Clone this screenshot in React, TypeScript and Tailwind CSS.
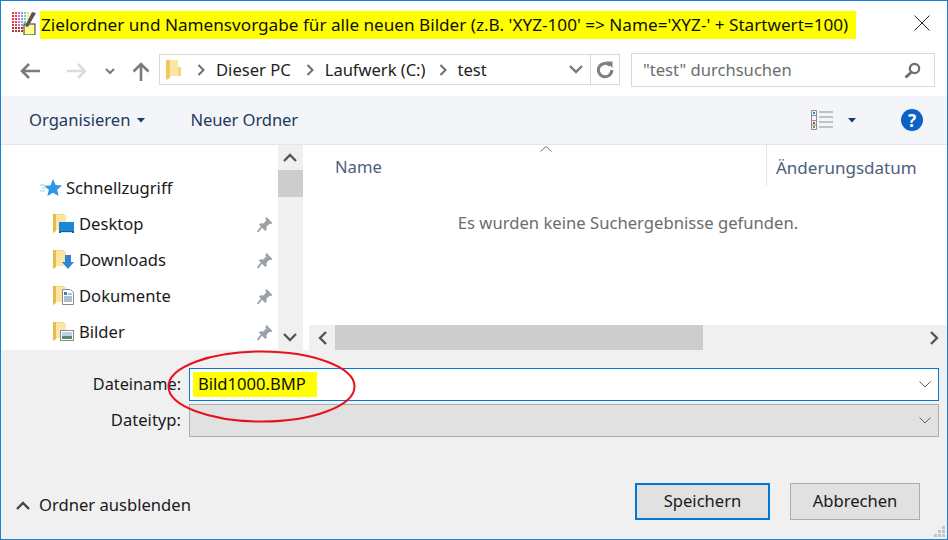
import React from "react";

const Folder = () => (
  <svg width="14" height="21" viewBox="0 0 14 21" className="shrink-0">
    <path d="M0 1h11v16H3l-3 3z" fill="#f6d77e" />
    <path d="M3 2h10v15H3z" fill="#fbe6a6" />
    <path d="M0 1h3v17l-3 2z" fill="#e9bb4e" />
  </svg>
);

const Pin = () => (
  <svg width="16" height="17" viewBox="0 0 16 17">
    <path d="M9.500 1l6 6-2 1.200-1-.5-3 3 .2 3-1.400 1.300-6.300-6.300 1.300-1.400 3 .2 3-3L8.300 3z" fill="#98a0a8" />
    <path d="M4.500 11L.6 16" stroke="#98a0a8" strokeWidth="1.800" />
  </svg>
);

function Overlay({ kind }: { kind: string }) {
  if (kind === "desktop")
    return (
      <svg width="15" height="11" viewBox="0 0 15 11">
        <rect width="15" height="11" fill="#1b87d6" />
        <rect y="9" width="15" height="2" fill="#0f5e9e" />
        <rect x="2" y="10" width="11" height="1" fill="#cfe6f7" />
      </svg>
    );
  if (kind === "down")
    return (
      <svg width="12" height="14" viewBox="0 0 12 14">
        <path d="M3 0h6v7h3l-6 7-6-7h3z" fill="#2e84d6" />
      </svg>
    );
  if (kind === "doc")
    return (
      <svg width="12" height="16" viewBox="0 0 12 16">
        <path d="M.5.500h8l3 3v12H.5z" fill="#fff" stroke="#8a8a8a" />
        <path d="M2 3h3v3H2z" fill="#3a7cc0" />
        <path d="M6 5h4M2 8h8M2 10h8M2 12h8" stroke="#5f7f9f" />
      </svg>
    );
  return (
    <svg width="14" height="11" viewBox="0 0 14 11">
      <rect x=".5" y=".5" width="13" height="10" fill="#fff" stroke="#8a8a8a" />
      <rect x="2" y="2" width="10" height="4" fill="#b8d3e8" />
      <rect x="2" y="6" width="10" height="3" fill="#5f8a6a" />
    </svg>
  );
}

function NavItem({ label, kind }: { label: string; kind: string }) {
  return (
    <div className="flex items-center h-9 pl-[52px] pr-[5px]">
      <div className="relative w-[26px] h-[22px] shrink-0">
        <Folder />
        <div className="absolute right-[5px] bottom-[2px] leading-none flex">
          <Overlay kind={kind} />
        </div>
      </div>
      <span className="flex-1 text-[#1a1a1a]">{label}</span>
      <Pin />
    </div>
  );
}

const Chevron = ({ d, w = 14, h = 14, color = "#5a5a5a", sw = 2.400 }: { d: string; w?: number; h?: number; color?: string; sw?: number }) => (
  <svg width={w} height={h} viewBox={`0 0 ${w} ${h}`} fill="none">
    <path d={d} stroke={color} strokeWidth={sw} />
  </svg>
);

const Crumb = () => (
  <svg width="8" height="12" viewBox="0 0 8 12" fill="none" className="shrink-0">
    <path d="M1.500 1l5 5-5 5" stroke="#6d6d6d" strokeWidth="2" />
  </svg>
);

const ComboChevron = () => (
  <svg width="12" height="7" viewBox="0 0 12 7" fill="none">
    <path d="M.5.500L6 6l5.500-5.500" stroke="#606060" />
  </svg>
);

function AppIcon() {
  const colors = ["#e33", "#e44", "#d6d", "#99d", "#6cc", "#ee3"];
  return (
    <div className="relative w-6 h-6 mr-[4px] shrink-0">
      <svg width="24" height="24" viewBox="0 0 24 24">
        {colors.map((c, i) =>
          [0, 1, 2, 3, 4, 5, 6].map((j) => (
            <rect key={`${i}-${j}`} x={i * 3} y={j * 3 + 1} width="2" height="2" fill={j > 4 ? "#a33" : c} />
          ))
        )}
        <rect x="12" y="13" width="11" height="11" fill="#fdfd90" stroke="#333" />
        <path d="M13 15l7-14 4 1-8 14z" fill="#555" />
      </svg>
    </div>
  );
}

export default function App() {
  return (
    <div className="relative w-[948px] h-[540px] overflow-hidden flex flex-col bg-white border border-[#1783d8] font-['Noto_Sans',sans-serif] text-[16.6px] leading-none">
      {/* Title */}
      <div className="h-[47px] flex items-start pl-[11px] pr-[17px] pt-[10px] shrink-0">
        <AppIcon />
        <div className="h-7 w-[816px] bg-[#ffff00] flex items-center pl-[1px] text-[#111] whitespace-nowrap text-[17.15px]">
          Zielordner und Namensvorgabe für alle neuen Bilder (z.B. 'XYZ-100' =&gt; Name='XYZ-' + Startwert=100)
        </div>
        <div className="flex-1 flex justify-end pt-[4px]">
          <svg width="16" height="16" viewBox="0 0 16 16" fill="none">
            <path d="M.5.500l15 15M15.500.500l-15 15" stroke="#222" />
          </svg>
        </div>
      </div>

      {/* Nav row */}
      <div className="h-[48px] flex items-start shrink-0 pl-[19px] pr-[12px]">
        <div className="w-[47px] h-[46px] flex items-center">
          <svg width="20" height="16" viewBox="0 0 20 16" fill="none">
            <path d="M20 8H2M9 1L2 8l7 7" stroke="#7a7a7a" strokeWidth="2.600" />
          </svg>
        </div>
        <div className="w-[38px] h-[46px] flex items-center">
          <svg width="20" height="16" viewBox="0 0 20 16" fill="none">
            <path d="M0 8h18M11 1l7 7-7 7" stroke="#dcdcdc" strokeWidth="2.600" />
          </svg>
        </div>
        <div className="w-[27px] h-[46px] flex items-center">
          <svg width="10" height="7" viewBox="0 0 10 7" fill="none">
            <path d="M1 1l4 4 4-4" stroke="#7a7a7a" strokeWidth="2" />
          </svg>
        </div>
        <div className="w-[27px] h-[46px] flex items-center">
          <svg width="18" height="19" viewBox="0 0 18 19" fill="none">
            <path d="M9 19V2M1.500 9.500L9 2l7.500 7.500" stroke="#7a7a7a" strokeWidth="2.600" />
          </svg>
        </div>
        {/* Address */}
        <div className="mt-[6px] w-[461px] h-[31px] border border-[#d9d9d9] flex items-center pl-[6px] text-[#222] whitespace-nowrap">
          <svg width="15" height="20" viewBox="0 0 15 20" className="shrink-0">
            <path d="M0 0h12v16H3l-3 3z" fill="#fbe6a6" />
            <path d="M0 0h4v18l-4 2z" fill="#f0c860" />
            <path d="M12 7h3v9h-3z" fill="#f6d77e" />
          </svg>
          <div className="w-[16px]" />
          <Crumb />
          <span className="ml-[11px] mr-[15px] pt-[2px]">Dieser PC</span>
          <Crumb />
          <span className="ml-[11px] mr-[14px] pt-[2px] tracking-[-0.05px]">Laufwerk (C:)</span>
          <Crumb />
          <span className="ml-[10px] flex-1 pt-[2px]">test</span>
          <div className="w-[29px] flex justify-center">
            <svg width="14" height="9" viewBox="0 0 14 9" fill="none">
              <path d="M1 1l6 6 6-6" stroke="#7a7a7a" strokeWidth="2.400" />
            </svg>
          </div>
          <div className="w-[29px] h-full border-l border-[#d9d9d9] flex items-center justify-center">
            <svg width="18" height="18" viewBox="0 0 18 18" fill="none">
              <path d="M14 4.500A6.700 6.700 0 1 0 15.800 9" stroke="#808080" strokeWidth="3" />
              <path d="M10 .5h6.500V7z" fill="#808080" />
            </svg>
          </div>
        </div>
        <div className="flex-1" />
        {/* Search */}
        <div className="mt-[5px] w-[304px] h-[34px] border border-[#d9d9d9] flex items-center pl-[11px] pr-[13px] text-[#6d6d6d] justify-between">
          <span>"test" durchsuchen</span>
          <svg width="17" height="17" viewBox="0 0 17 17" fill="none">
            <circle cx="10.500" cy="6.500" r="4.700" stroke="#6d6d6d" strokeWidth="2.200" />
            <path d="M7 10.500L1.500 15.500" stroke="#6d6d6d" strokeWidth="3" />
          </svg>
        </div>
      </div>

      {/* Toolbar */}
      <div className="h-[49px] bg-[#f3f5f8] border-b border-[#e5e5e5] flex items-center pl-[28px] pr-[24px] text-[#1e3a5f] shrink-0">
        <span>Organisieren</span>
        <svg width="8" height="5" viewBox="0 0 8 5" className="ml-[7px]">
          <path d="M0 0h8L4 4.500z" fill="#1e3a5f" />
        </svg>
        <span className="ml-[45px] tracking-[-0.1px]">Neuer Ordner</span>
        <div className="flex-1" />
        <svg width="22" height="20" viewBox="0 0 22 20" fill="none">
          <path d="M.5.500h5v19h-5zM.5 5.500h5M.5 10.500h5M.5 15h5" stroke="#8d8d8d" />
          <path d="M8 2h14M8 7h14M8 12h14M8 17h14" stroke="#8d8d8d" />
          <rect x="2" y="2" width="2" height="2" fill="#3a7cc0" />
          <rect x="2" y="12" width="2" height="2" fill="#d33" />
          <rect x="2" y="16" width="2" height="2" fill="#6a9a4a" />
        </svg>
        <svg width="8" height="5" viewBox="0 0 8 5" className="ml-[15px]">
          <path d="M0 0h8L4 4.500z" fill="#1e3a5f" />
        </svg>
        <div className="ml-[45px] w-[22px] h-[22px] rounded-full bg-[#0b63c5] text-white flex items-center justify-center font-bold text-[17px]">?</div>
      </div>

      {/* Content */}
      <div className="h-[205px] flex shrink-0 overflow-hidden">
        {/* Sidebar */}
        <div className="w-[277px] h-full pt-[25px] shrink-0">
          <div className="flex items-center h-9 pl-[39px]">
            <svg width="22" height="20" viewBox="0 0 22 20" className="mr-[4px] shrink-0">
              <path d="M13 1l2.600 6 6.400.6-4.800 4.200 1.400 6.200-5.600-3.300L7.400 18l1.400-6.200-4.500-4 6.200-.2z" fill="#2b97ea" />
              <path d="M0 7h5M2 10h4M0 13h5" stroke="#9cd0f5" />
            </svg>
            <span className="text-[#1a1a1a]">Schnellzugriff</span>
          </div>
          <NavItem label="Desktop" kind="desktop" />
          <NavItem label="Downloads" kind="down" />
          <NavItem label="Dokumente" kind="doc" />
          <NavItem label="Bilder" kind="pic" />
        </div>
        {/* V scrollbar */}
        <div className="w-[25px] h-full bg-[#f0f0f0] flex flex-col items-center shrink-0">
          <div className="h-[25px] flex items-center w-full justify-center pr-[1px]">
            <Chevron w={14} h={9} d="M1 8l6-6 6 6" color="#555" />
          </div>
          <div className="h-[27px] w-full bg-[#cdcdcd]" />
          <div className="flex-1" />
          <div className="h-[25px] flex items-center w-full justify-center pr-[1px]">
            <Chevron w={14} h={9} d="M1 1l6 6 6-6" color="#555" />
          </div>
        </div>
        {/* Right */}
        <div className="relative flex-1 flex flex-col min-w-0">
          <div className="flex h-[41px] shrink-0 text-[#4c607a]">
            <div className="w-[464px] border-r border-[#e5e5e5] pl-[32px] pt-[14px]">Name</div>
            <div className="pl-[9px] pt-[14px] whitespace-nowrap text-[17px]">Änderungsdatum</div>
          </div>
          <svg width="12" height="6" viewBox="0 0 12 6" fill="none" className="absolute left-[237px] top-[1px]">
            <path d="M.5 5.500L6 .5l5.500 5" stroke="#6d6d6d" />
          </svg>
          <div className="flex-1 flex justify-center pt-[29px] text-[#6d6d6d] text-[16.65px]">
            <span className="ml-[6px] whitespace-nowrap">Es wurden keine Suchergebnisse gefunden.</span>
          </div>
          <div className="h-[25px] ml-[6px] bg-[#f0f0f0] flex items-center shrink-0">
            <div className="w-[26px] flex justify-center">
              <Chevron w={9} h={14} d="M8 1L2 7l6 6" color="#555" />
            </div>
            <div className="w-[368px] h-full bg-[#cdcdcd]" />
            <div className="flex-1" />
            <div className="w-[25px] flex justify-center">
              <Chevron w={9} h={14} d="M1 1l6 6-6 6" color="#555" />
            </div>
          </div>
        </div>
      </div>

      {/* Bottom */}
      <div className="relative flex-1 bg-[#f0f0f0] flex flex-col pt-[18px] pr-[8px]">
        <div className="flex items-center h-[33px] mb-[3px]">
          <span className="w-[180px] text-right text-[#1a1a1a] text-[16.3px]">Dateiname:</span>
          <div className="ml-[8px] flex-1 h-full bg-white border border-[#0078d7] flex items-center pl-[3px] pr-[7px] justify-between">
            <div className="h-[25px] w-[124px] bg-[#ffff00] flex items-center pl-[5px] text-[#111]">Bild1000.BMP</div>
            <ComboChevron />
          </div>
        </div>
        <div className="flex items-center h-[33px]">
          <span className="w-[180px] text-right text-[#1a1a1a]">Dateityp:</span>
          <div className="ml-[8px] flex-1 h-full bg-[#e1e1e1] border border-[#adadad] flex items-center pr-[7px] justify-end">
            <ComboChevron />
          </div>
        </div>
        <div className="flex items-center mt-[46px] pl-[15px] pr-[19px]">
          <div className="flex items-center mt-[8px]">
            <svg width="14" height="9" viewBox="0 0 14 9" fill="none" className="mr-[9px]">
              <path d="M1 8l6-6 6 6" stroke="#444" strokeWidth="2.400" />
            </svg>
            <span className="text-[#1a1a1a]">Ordner ausblenden</span>
          </div>
          <div className="flex-1" />
          <button className="w-[135px] h-[37px] bg-[#e1e1e1] border-2 border-[#0078d7] text-[#1a1a1a]">Speichern</button>
          <button className="ml-[20px] w-[130px] h-[37px] bg-[#e1e1e1] border border-[#adadad] text-[#1a1a1a]">Abbrechen</button>
        </div>
        <svg width="12" height="12" viewBox="0 0 12 12" className="absolute right-[1px] bottom-[1px]">
          <path d="M8 0h3v3H8zM4 4h3v3H4zM8 4h3v3H8zM0 8h3v3H0zM4 8h3v3H4zM8 8h3v3H8z" fill="#c4c4c4" />
        </svg>
      </div>

      {/* Red annotation */}
      <svg width="190" height="74" viewBox="0 0 190 74" fill="none" className="absolute left-[165px] top-[349px] pointer-events-none">
        <ellipse cx="95.500" cy="36.500" rx="93" ry="35" stroke="#e8101c" strokeWidth="2" />
      </svg>
    </div>
  );
}
